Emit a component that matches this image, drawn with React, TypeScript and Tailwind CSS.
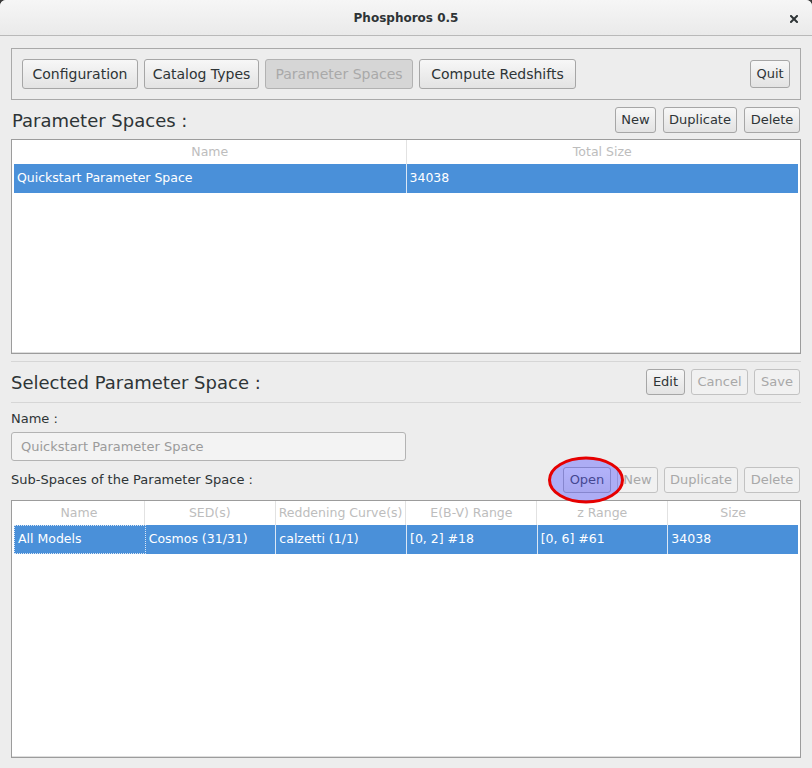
import React from "react";

const font = "font-['DejaVu_Sans','Liberation_Sans',sans-serif]";

function Btn({
  children,
  w,
  kind = "normal",
  tall = false,
}: {
  children: React.ReactNode;
  w: string;
  kind?: "normal" | "disabled" | "pressed";
  tall?: boolean;
}) {
  const base = `${w} ${tall ? "h-[30px] text-[14px]" : "h-[26px] text-[13px]"} shrink-0 flex items-center justify-center rounded-[3px] border`;
  const style =
    kind === "normal"
      ? "border-[#a6a6a6] bg-linear-to-b from-[#f7f7f7] to-[#e3e3e3] text-[#2e3436]"
      : kind === "pressed"
      ? "border-[#b2b2b2] bg-[#d6d6d6] text-[#a9a9a9]"
      : "border-[#c2c2c2] bg-[#f1f1f1] text-[#a8a8a8]";
  return <div className={`${base} ${style}`}>{children}</div>;
}

function Table({
  headers,
  row,
  cls,
  focusFirst = false,
}: {
  headers: string[];
  row: string[];
  cls: string;
  focusFirst?: boolean;
}) {
  return (
    <div className={`${cls} border border-[#9c9c9c] bg-white px-[2px] flex flex-col shadow-[inset_0_-1px_0_#dedede]`}>
      <div className="flex h-[24px] shrink-0">
        {headers.map((h, i) => (
          <div
            key={i}
            className={`flex-1 min-w-0 flex items-center justify-center text-[12.5px] text-[#bdbdbd] whitespace-nowrap overflow-hidden ${
              i < headers.length - 1 ? "border-r border-[#e2e2e2]" : ""
            }`}
          >
            {h}
          </div>
        ))}
      </div>
      <div className="flex h-[29px] shrink-0 bg-[#4a90d9]">
        {row.map((c, i) => (
          <div
            key={i}
            className={`flex-1 min-w-0 flex items-center pl-[3px] text-[12.5px] text-white whitespace-nowrap overflow-hidden ${
              i < row.length - 1 ? "border-r border-[#dbe7f5]" : ""
            } ${focusFirst && i === 0 ? "border-[1px] border-dotted border-[#c9975a] pl-[1px]" : ""}`}
          >
            {c}
          </div>
        ))}
      </div>
    </div>
  );
}

export default function App() {
  return (
    <div className={`w-[812px] h-[768px] bg-[#3a3a3a] ${font}`}>
      <div className="w-full h-full rounded-t-[6px] bg-[#ededed] flex flex-col overflow-hidden">
        {/* Title bar */}
        <div className="h-[36px] shrink-0 relative flex items-center justify-center bg-linear-to-b from-[#f6f6f6] to-[#eaeaea] border-b border-[#b9b9b9]">
          <span className="text-[12px] font-bold text-[#2e3436]">Phosphoros 0.5</span>
          <svg className="absolute right-[14px] top-[15px]" width="8" height="8" viewBox="0 0 8 8">
            <path d="M1 1 L7 7 M7 1 L1 7" stroke="#2e3436" strokeWidth="2" strokeLinecap="square" />
          </svg>
        </div>

        {/* Content */}
        <div className="flex-1 flex flex-col px-[11px] pt-[12px] pb-[10px] min-h-0">
          {/* Toolbar */}
          <div className="h-[52px] shrink-0 border border-[#a9a9a9] flex items-center px-[10px] gap-[6px]">
            <Btn w="w-[116px]" tall>Configuration</Btn>
            <Btn w="w-[115px]" tall>Catalog Types</Btn>
            <Btn w="w-[148px]" tall kind="pressed">Parameter Spaces</Btn>
            <Btn w="w-[157px]" tall>Compute Redshifts</Btn>
            <div className="ml-auto w-[40px] h-[28px] flex items-center justify-center rounded-[3px] border border-[#a6a6a6] bg-linear-to-b from-[#f7f7f7] to-[#e3e3e3] text-[13px] text-[#2e3436]">
              Quit
            </div>
          </div>

          {/* Parameter Spaces header */}
          <div className="mt-[7px] h-[26px] shrink-0 flex items-center">
            <span className="text-[18px] text-[#2e3436] pl-[1px]">Parameter Spaces :</span>
            <div className="ml-auto flex gap-[7px] mr-[1px]">
              <Btn w="w-[41px]">New</Btn>
              <Btn w="w-[74px]">Duplicate</Btn>
              <Btn w="w-[56px]">Delete</Btn>
            </div>
          </div>

          <Table
            cls="mt-[6px] h-[215px] shrink-0"
            headers={["Name", "Total Size"]}
            row={["Quickstart Parameter Space", "34038"]}
          />

          <div className="mt-[7px] h-px shrink-0 bg-[#d6d6d6]" />

          {/* Selected Parameter Space header */}
          <div className="mt-[7px] h-[26px] shrink-0 flex items-center">
            <span className="text-[18px] text-[#2e3436]">Selected Parameter Space :</span>
            <div className="ml-auto flex gap-[6px] mr-[1px]">
              <Btn w="w-[39px]">Edit</Btn>
              <Btn w="w-[57px]" kind="disabled">Cancel</Btn>
              <Btn w="w-[46px]" kind="disabled">Save</Btn>
            </div>
          </div>

          <div className="mt-[7px] h-px shrink-0 bg-[#d6d6d6]" />

          <div className="mt-[8px] h-[16px] shrink-0 text-[13px] leading-[16px] text-[#2e3436]">Name :</div>
          <div className="mt-[5px] h-[29px] w-[395px] shrink-0 rounded-[3px] border border-[#b3b3b3] bg-[#f3f3f3] flex items-center pl-[9px] text-[13px] text-[#9b9b9b]">
            Quickstart Parameter Space
          </div>

          {/* Sub-spaces header */}
          <div className="mt-[6px] h-[26px] shrink-0 flex items-center">
            <span className="text-[13px] text-[#2e3436]">Sub-Spaces of the Parameter Space :</span>
            <div className="ml-auto flex gap-[6px] mr-[1px] relative">
              <Btn w="w-[48px]">Open</Btn>
              <Btn w="w-[41px]" kind="disabled">New</Btn>
              <Btn w="w-[74px]" kind="disabled">Duplicate</Btn>
              <Btn w="w-[56px]" kind="disabled">Delete</Btn>
              <svg
                className="absolute left-[-16px] top-[-11px] pointer-events-none"
                width="78"
                height="48"
                viewBox="0 0 78 48"
              >
                <ellipse cx="39" cy="24" rx="36.5" ry="22" fill="rgba(96,96,255,0.45)" stroke="#e60000" strokeWidth="3" />
              </svg>
            </div>
          </div>

          <Table
            cls="mt-[7px] flex-1 min-h-0"
            headers={["Name", "SED(s)", "Reddening Curve(s)", "E(B-V) Range", "z Range", "Size"]}
            row={["All Models", "Cosmos (31/31)", "calzetti (1/1)", "[0, 2] #18", "[0, 6] #61", "34038"]}
            focusFirst
          />
        </div>
      </div>
    </div>
  );
}
